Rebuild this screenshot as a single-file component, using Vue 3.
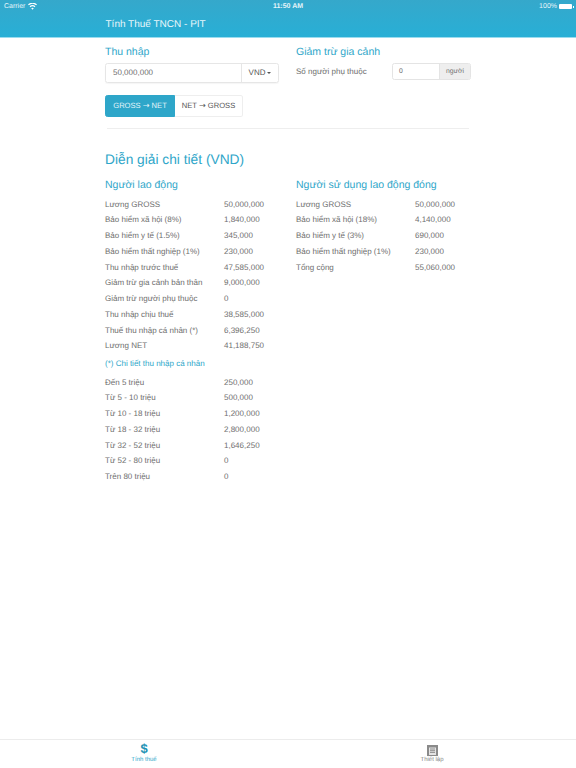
<script setup>
const employee = [
  ['Lương GROSS', '50,000,000'],
  ['Bảo hiểm xã hội (8%)', '1,840,000'],
  ['Bảo hiểm y tế (1.5%)', '345,000'],
  ['Bảo hiểm thất nghiệp (1%)', '230,000'],
  ['Thu nhập trước thuế', '47,585,000'],
  ['Giảm trừ gia cảnh bản thân', '9,000,000'],
  ['Giảm trừ người phụ thuộc', '0'],
  ['Thu nhập chịu thuế', '38,585,000'],
  ['Thuế thu nhập cá nhân (*)', '6,396,250'],
  ['Lương NET', '41,188,750'],
]
const employer = [
  ['Lương GROSS', '50,000,000'],
  ['Bảo hiểm xã hội (18%)', '4,140,000'],
  ['Bảo hiểm y tế (3%)', '690,000'],
  ['Bảo hiểm thất nghiệp (1%)', '230,000'],
  ['Tổng cộng', '55,060,000'],
]
const brackets = [
  ['Đến 5 triệu', '250,000'],
  ['Từ 5 - 10 triệu', '500,000'],
  ['Từ 10 - 18 triệu', '1,200,000'],
  ['Từ 18 - 32 triệu', '2,800,000'],
  ['Từ 32 - 52 triệu', '1,646,250'],
  ['Từ 52 - 80 triệu', '0'],
  ['Trên 80 triệu', '0'],
]
</script>

<template>
  <div class="app">
    <header class="top">
      <div class="status">
        <div class="status-left">
          <span>Carrier</span>
          <svg width="9" height="7" viewBox="0 0 18 14"><path d="M9 13.5 6.4 10.4a4 4 0 0 1 5.2 0L9 13.5ZM4.8 8.5 3.2 6.6a9 9 0 0 1 11.6 0l-1.6 1.9a6.5 6.5 0 0 0-8.4 0ZM1.7 4.7 0 2.8a13.6 13.6 0 0 1 18 0l-1.7 1.9a11 11 0 0 0-14.6 0Z" fill="#fff"/></svg>
        </div>
        <div class="status-time">11:50 AM</div>
        <div class="status-right">
          <span>100%</span>
          <span class="battery"><i></i></span>
        </div>
      </div>
      <div class="nav-title">Tính Thuế TNCN - PIT</div>
    </header>

    <main class="content">
      <section class="form-row">
        <div class="col">
          <h4>Thu nhập</h4>
          <div class="income-group">
            <div class="income-input">50,000,000</div>
            <div class="income-unit">VND<span class="caret"></span></div>
          </div>
          <div class="switch">
            <div class="switch-btn active">GROSS <span class="arrow">→</span> NET</div>
            <div class="switch-btn">NET <span class="arrow">→</span> GROSS</div>
          </div>
        </div>
        <div class="col">
          <h4>Giảm trừ gia cảnh</h4>
          <div class="dep-row">
            <span class="dep-label">Số người phụ thuộc</span>
            <div class="dep-group">
              <div class="dep-input">0</div>
              <div class="dep-unit">người</div>
            </div>
          </div>
        </div>
      </section>

      <hr class="rule" />

      <h3>Diễn giải chi tiết (VND)</h3>

      <section class="detail-row">
        <div class="col">
          <h4 class="sub">Người lao động</h4>
          <div v-for="r in employee" :key="r[0]" class="row">
            <span class="label">{{ r[0] }}</span><span>{{ r[1] }}</span>
          </div>
          <div class="note">(*) Chi tiết thu nhập cá nhân</div>
          <div v-for="r in brackets" :key="r[0]" class="row">
            <span class="label">{{ r[0] }}</span><span>{{ r[1] }}</span>
          </div>
        </div>
        <div class="col">
          <h4 class="sub">Người sử dụng lao động đóng</h4>
          <div v-for="r in employer" :key="r[0]" class="row">
            <span class="label">{{ r[0] }}</span><span>{{ r[1] }}</span>
          </div>
        </div>
      </section>
    </main>

    <footer class="tabs">
      <div class="tab current">
        <span class="dollar">$</span>
        <span class="tab-label">Tính thuế</span>
      </div>
      <div class="tab">
        <svg class="tab-icon" width="11" height="11" viewBox="0 0 11 11">
          <rect x="0" y="0" width="11" height="11" fill="#8a8a8a"/>
          <rect x="2" y="2.5" width="7" height="7.5" fill="#e4e4e4"/>
          <path d="M3 4h5M3 5.7h5M3 7.4h5" stroke="#777" stroke-width=".8"/>
        </svg>
        <span class="tab-label">Thiết lập</span>
      </div>
    </footer>
  </div>
</template>

<style>
html, body { margin: 0; padding: 0; background: #fff; }
</style>

<style scoped>
.app {
  width: 576px;
  height: 768px;
  display: flex;
  flex-direction: column;
  overflow: hidden;
  background: #fff;
  color: #6e6e6e;
  font-family: "Liberation Sans", Arial, sans-serif;
  font-size: 8px;
  line-height: 12.5px;
  text-rendering: geometricPrecision;
}
.top {
  height: 38px;
  flex: none;
  box-sizing: border-box;
  background: linear-gradient(#35a8cb, #28afd6);
  border-bottom: 1px solid #9adcef;
  color: #fff;
}
.status {
  height: 13px;
  padding: 0 4px;
  display: grid;
  grid-template-columns: 1fr auto 1fr;
  align-items: center;
  font-size: 7px;
  line-height: 13px;
  color: #e6f5fa;
}
.status-left { display: flex; align-items: center; gap: 3px; }
.status-time { font-weight: 700; }
.status-right { display: flex; align-items: center; justify-content: flex-end; gap: 2px; }
.battery {
  width: 13px;
  height: 5px;
  background: #fff;
  border-radius: 1px;
  position: relative;
}
.battery i {
  position: absolute;
  right: -1.5px;
  top: 1.5px;
  width: 1px;
  height: 2px;
  background: #fff;
}
.nav-title {
  padding-left: 105.5px;
  padding-top: 1px;
  font-size: 10px;
  line-height: 22px;
  color: #e8f6fa;
}
.content {
  flex: 1;
  width: 366px;
  margin-left: 105px;
}
.form-row, .detail-row {
  display: grid;
  grid-template-columns: 191px 175px;
}
.form-row { padding-top: 7px; }
h4 {
  margin: 0;
  font-size: 10.5px;
  line-height: 14px;
  font-weight: 400;
  color: #2ea6c9;
}
.income-group {
  margin-top: 4px;
  width: 174px;
  height: 20px;
  display: flex;
  box-sizing: border-box;
  border: 1px solid #e6e6e6;
  border-radius: 2.5px;
  box-shadow: 0 1px 1px rgba(0,0,0,.04);
}
.income-input {
  flex: 1;
  padding-left: 7px;
  line-height: 18px;
  border-right: 1px solid #e6e6e6;
}
.income-unit {
  width: 36px;
  text-align: center;
  line-height: 18px;
  color: #555;
}
.caret {
  display: inline-block;
  margin-left: 2px;
  vertical-align: 1px;
  border-top: 2.5px solid #555;
  border-left: 2.5px solid transparent;
  border-right: 2.5px solid transparent;
}
.switch {
  display: flex;
  margin-top: 12px;
  width: 138px;
  height: 22px;
  font-size: 7.6px;
}
.switch-btn {
  flex: 1;
  box-sizing: border-box;
  text-align: center;
  line-height: 20px;
  border: 1px solid #eee;
  border-left: 0;
  border-radius: 0 2.5px 2.5px 0;
  color: #555;
}
.switch-btn.active {
  flex: none;
  width: 70px;
  border: 1px solid #2ea6c9;
  border-radius: 2.5px 0 0 2.5px;
  background: #2ea6c9;
  color: #e5f5fa;
}
.arrow {
  font-family: "DejaVu Sans", sans-serif;
  font-size: 8px;
}
.dep-row {
  display: flex;
  align-items: flex-start;
  margin-top: 4px;
}
.dep-label { width: 96px; flex: none; padding-top: 3px; }
.dep-group {
  display: flex;
  width: 79px;
  height: 17px;
  box-sizing: border-box;
  border: 1px solid #e4e4e4;
  border-radius: 2.5px;
  font-size: 6.8px;
  line-height: 15px;
}
.dep-input { flex: 1; padding-left: 6px; }
.dep-unit {
  width: 30px;
  text-align: center;
  background: #eee;
  border-left: 1px solid #e4e4e4;
}
.rule {
  margin: 11px 0 0 2px;
  width: 362px;
  height: 1px;
  border: 0;
  background: #eee;
}
h3 {
  margin: 21px 0 0;
  font-size: 13.75px;
  line-height: 20px;
  font-weight: 400;
  color: #2ea6c9;
}
.detail-row { margin-top: 8px; }
.sub { margin-bottom: 4.5px; }
.row {
  display: flex;
  height: 15.75px;
  line-height: 15.75px;
}
.label { width: 119px; flex: none; }
.note {
  margin: 2px 0 3.5px;
  height: 15px;
  line-height: 15px;
  font-size: 8px;
  color: #2ea6c9;
}
.tabs {
  height: 29px;
  flex: none;
  display: grid;
  grid-template-columns: 1fr 1fr;
  border-top: 1px solid #ececec;
  box-sizing: border-box;
}
.tab {
  display: flex;
  flex-direction: column;
  align-items: center;
  color: #888;
}
.tab-icon { margin-top: 5px; display: block; }
.tab-label {
  font-size: 6px;
  line-height: 9px;
  margin-top: 0;
}
.dollar {
  font-size: 13px;
  font-weight: 700;
  line-height: 15px;
  margin-top: 1px;
  color: #1f93b5;
}
.current { color: #2ea6c9; }
</style>
